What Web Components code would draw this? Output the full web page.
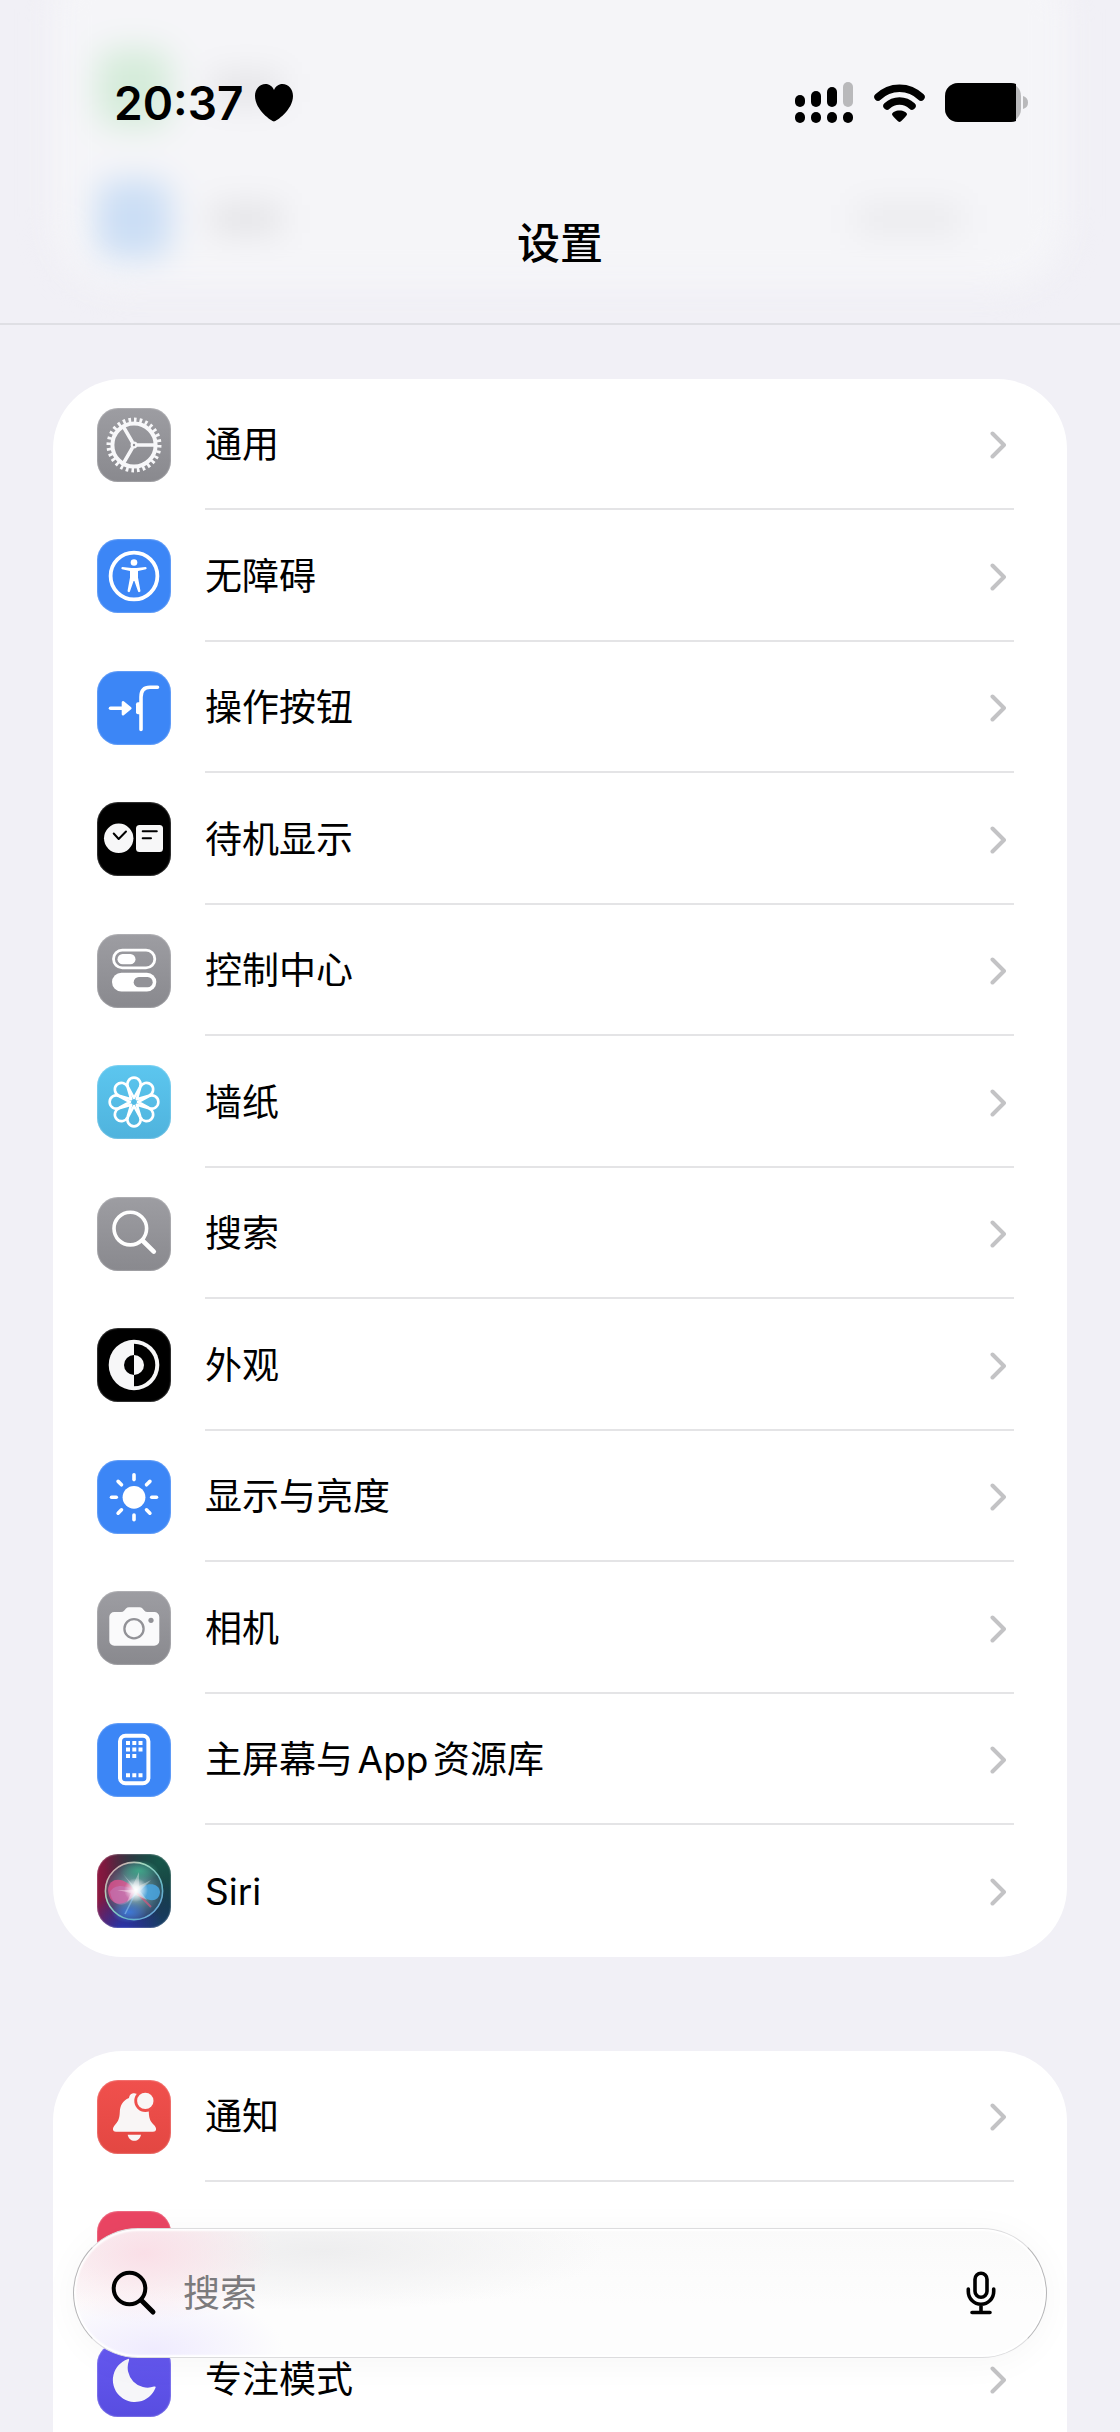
<!DOCTYPE html>
<html lang="zh-CN">
<head>
<meta charset="utf-8">
<meta name="viewport" content="width=device-width, initial-scale=1">
<title>设置</title>
<style>
    html, body {
        height: 100%;
        margin: 0;
    }

    body {
        background: #f1f0f6;
        color: #000;
        font: 400 37px/52px Inter, "Noto Sans CJK SC", sans-serif;
    }
</style>
</head>
<body>
<settings-app>
    <settings-header slot="header">设置</settings-header>

    <settings-group>
        <settings-row icon="gear">通用</settings-row>
        <settings-row icon="accessibility">无障碍</settings-row>
        <settings-row icon="action">操作按钮</settings-row>
        <settings-row icon="standby">待机显示</settings-row>
        <settings-row icon="control">控制中心</settings-row>
        <settings-row icon="wallpaper">墙纸</settings-row>
        <settings-row icon="search">搜索</settings-row>
        <settings-row icon="appearance">外观</settings-row>
        <settings-row icon="display">显示与亮度</settings-row>
        <settings-row icon="camera">相机</settings-row>
        <settings-row icon="home">主屏幕与App资源库</settings-row>
        <settings-row icon="siri">Siri</settings-row>
    </settings-group>

    <settings-group continued>
        <settings-row icon="bell">通知</settings-row>
        <settings-row icon="sound"></settings-row>
        <settings-row icon="moon">专注模式</settings-row>
    </settings-group>

    <settings-search slot="search" placeholder="搜索"></settings-search>
</settings-app>

<script>
const PETAL = 'M37 33 L31 22 A6.6 6.6 0 1 1 43 22 Z';

// every icon is drawn on a 74 x 74 tile
const ICONS = {
    gear: {
        bg: 'linear-gradient(#9d9da2, #89898e)',
        svg: `
            <g fill="none" stroke="#f7f7f9">
                <circle cx="37" cy="37" r="25" stroke-width="5" pathLength="84" stroke-dasharray="1.4 1.6"/>
                <circle cx="37" cy="37" r="21.6" stroke-width="4"/>
                <path d="M40 37H58M35.500 34.400L26.500 18.800M35.500 39.600L26.500 55.200" stroke-width="3.6"/>
                <circle cx="37" cy="37" r="2.300" stroke-width="2.200"/>
            </g>`
    },
    accessibility: {
        bg: '#3c86f6',
        svg: `
            <circle cx="37" cy="37" r="23.4" fill="none" stroke="#fff" stroke-width="3.8"/>
            <circle cx="37" cy="23.500" r="3.300" fill="#fff"/>
            <path fill="#fff" d="M25.500 27.900L34.500 28.900H39.500L48.500 27.900A1.300 1.300 0 0 1 49 30.300L41 31.900V38.500L43.400 51.500A1.200 1.200 0 0 1 41 52.200L37.400 42H36.600L33 52.200A1.200 1.200 0 0 1 30.600 51.500L33 38.500V31.900L25 30.300A1.300 1.300 0 0 1 25.500 27.900Z"/>`
    },
    action: {
        bg: '#3c86f6',
        svg: `
            <g fill="none" stroke="#fff" stroke-width="3.6" stroke-linecap="round" stroke-linejoin="round">
                <path d="M13.500 37.300H26"/>
                <path d="M44 58.500V26Q44 16.300 53 16.300H60.500"/>
            </g>
            <path d="M26 31.300V43.300L33.300 37.300Z" fill="#fff" stroke="#fff" stroke-width="2.600" stroke-linejoin="round"/>
            <rect x="39" y="31.300" width="6" height="12" rx="2" fill="#fff"/>`
    },
    standby: {
        bg: '#000',
        svg: `
            <circle cx="21.700" cy="36.300" r="14.700" fill="#f7f7f8"/>
            <rect x="39" y="23" width="27" height="27" rx="3.500" fill="#f7f7f8"/>
            <path d="M16.700 31.500L21.700 37L29 29.500M45.700 29.300H59.800M45.700 36.300H54" fill="none" stroke="#000" stroke-width="2" stroke-linecap="round" stroke-linejoin="round"/>`
    },
    control: {
        bg: 'linear-gradient(#9d9da2, #89898e)',
        svg: `
            <rect x="16.500" y="16.200" width="41.300" height="17.600" rx="8.800" fill="none" stroke="#fff" stroke-width="2.800"/>
            <rect x="20.500" y="20" width="18" height="10.300" rx="5.150" fill="#fff"/>
            <rect x="15" y="38.700" width="44.300" height="18.800" rx="9.400" fill="#fff"/>
            <rect x="36.700" y="43" width="19" height="10.300" rx="5.150" fill="#929297"/>`
    },
    wallpaper: {
        bg: 'linear-gradient(#5cc6ef, #4fb3dd)',
        svg: `
            <g fill="none" stroke="#fff" stroke-width="2.600" stroke-linejoin="round">
                ${[0, 45, 90, 135, 180, 225, 270, 315].map(a => `<path d="${PETAL}" transform="rotate(${a} 37 37)"/>`).join('')}
            </g>
            <circle cx="37" cy="37" r="2.300" fill="#55bce6"/>`
    },
    search: {
        bg: 'linear-gradient(#9d9da2, #89898e)',
        svg: `
            <g fill="none" stroke="#fff" stroke-linecap="round">
                <circle cx="33.300" cy="31.600" r="16.300" stroke-width="3.600"/>
                <path d="M45.500 43.500L56.800 54.600" stroke-width="4.600"/>
            </g>`
    },
    appearance: {
        bg: '#000',
        svg: `
            <circle cx="37" cy="37" r="25.300" fill="#f7f7f8"/>
            <path d="M37 15.700A21.300 21.300 0 0 1 37 58.300Z"/>
            <path d="M37 27A10 10 0 0 0 37 47Z"/>
            <path d="M37 27A10 10 0 0 1 37 47Z" fill="#f7f7f8"/>`
    },
    display: {
        bg: '#3c86f6',
        svg: `
            <circle cx="37" cy="37.300" r="11.400" fill="#fff"/>
            <g stroke="#fff" stroke-width="3.600" stroke-linecap="round">
                ${[0, 45, 90, 135, 180, 225, 270, 315].map(a => `<path d="M37 14.800V19.600" transform="rotate(${a} 37 37.300)"/>`).join('')}
            </g>`
    },
    camera: {
        bg: 'linear-gradient(#9d9da2, #89898e)',
        svg: `
            <path fill="#fafafb" d="M17.300 21H24Q26 21 27.300 19.500L29 17.600Q30.200 16.300 32 16.300H42.500Q44.300 16.300 45.500 17.600L47.200 19.500Q48.500 21 50.500 21H57.300A5 5 0 0 1 62.300 26V49.700A5 5 0 0 1 57.300 54.700H17.300A5 5 0 0 1 12.300 49.700V26A5 5 0 0 1 17.300 21Z"/>
            <circle cx="37" cy="37.700" r="9.600" fill="none" stroke="#929297" stroke-width="2.300"/>
            <circle cx="54" cy="29.300" r="2.600" fill="#929297"/>`
    },
    home: {
        bg: '#3c86f6',
        svg: `
            <rect x="23" y="12.700" width="28.400" height="47.600" rx="5.500" fill="none" stroke="#fff" stroke-width="4"/>
            <path fill="#fff" d="M29 18h4v4h-4zM35.300 18h4v4h-4zM41.500 18h4v4h-4zM29 24.500h4v4h-4zM35.300 24.500h4v4h-4zM41.500 24.500h4v4h-4zM29 31h4v4h-4zM35.300 31h4v4h-4zM29 50.300h4v4h-4zM35.300 50.300h4v4h-4zM41.500 50.300h4v4h-4z"/>`
    },
    siri: {
        bg: 'radial-gradient(circle at 35% 105%, #2436b4, transparent 45%), radial-gradient(circle at 90% 100%, #173f66, transparent 50%), radial-gradient(circle at 85% 10%, #17564a, transparent 60%), linear-gradient(90deg, #8d1740, #3d1f3a 50%, #12343c)',
        svg: `
            <defs>
                <radialGradient id="orb" cx=".5" cy=".5" r=".5">
                    <stop offset="0" stop-color="#b9d6dd"/>
                    <stop offset=".5" stop-color="#6f9fa8" stop-opacity=".75"/>
                    <stop offset="1" stop-color="#4a6d86" stop-opacity=".35"/>
                </radialGradient>
                <radialGradient id="glow" cx=".5" cy=".5" r=".5">
                    <stop offset="0" stop-color="#fff"/>
                    <stop offset=".3" stop-color="#fff" stop-opacity=".8"/>
                    <stop offset="1" stop-color="#fff" stop-opacity="0"/>
                </radialGradient>
                <linearGradient id="rim" x1="0" y1="0" x2="1" y2="1">
                    <stop offset="0" stop-color="#e88fa5"/>
                    <stop offset=".35" stop-color="#9fd9bd"/>
                    <stop offset=".7" stop-color="#64b5c8"/>
                    <stop offset="1" stop-color="#6fa0e8"/>
                </linearGradient>
                <radialGradient id="top" cx=".5" cy=".5" r=".5">
                    <stop offset="0" stop-color="#3fa588"/>
                    <stop offset="1" stop-color="#3fa588" stop-opacity="0"/>
                </radialGradient>
                <radialGradient id="bottom" cx=".5" cy=".5" r=".5">
                    <stop offset="0" stop-color="#3d77d6"/>
                    <stop offset="1" stop-color="#3d77d6" stop-opacity="0"/>
                </radialGradient>
            </defs>
            <circle cx="37" cy="37" r="29" fill="url(#orb)"/>
            <ellipse cx="42" cy="17" rx="20" ry="11" fill="url(#top)"/>
            <ellipse cx="32" cy="58" rx="18" ry="11" fill="url(#bottom)"/>
            <path d="M38 38C32 24 12 20 11 36C12 54 30 54 38 38Z" fill="#e0518e" fill-opacity=".8"/>
            <path d="M38 38C30 30 17 30 13 38C16 56 32 54 38 38Z" fill="#c08ccf" fill-opacity=".4"/>
            <path d="M40 37C48 28 62 28 63 38C62 50 48 48 40 37Z" fill="#4aa6e2" fill-opacity=".85"/>
            <path d="M40 39L54 53" stroke="#d5567e" stroke-width="2" stroke-opacity=".7"/>
            <path d="M38 40L28 60" stroke="#8cc3f2" stroke-width="1.500" stroke-opacity=".6"/>
            <path d="M38 36L26 20L36 31L42 18L42 32L54 26L43 37L50 46L39 41L30 48L34 39L20 36Z" fill="#fff" fill-opacity=".35"/>
            <circle cx="39" cy="36" r="12" fill="url(#glow)"/>
            <circle cx="37" cy="37" r="28.600" fill="none" stroke="url(#rim)" stroke-width="1.600"/>`
    },
    bell: {
        bg: 'linear-gradient(#f0504d, #e34742)',
        svg: `
            <path fill="#f9f6f6" d="M37.300 13.300C33.500 13.300 32.500 15.500 32 18C25.500 20.500 23 26 22.800 32C22.500 40 20.500 42 17.500 45.500C15 48.500 15.500 51.700 19 51.700H56C59.500 51.700 60 48.500 57.500 45.500C54 42 52 40 51.800 32C51.800 24 45 14 37.300 13.300Z"/>
            <path fill="#f9f6f6" d="M30.700 54.800H44C43 59 40.500 60.800 37.300 60.800S31.700 59 30.700 54.800Z"/>
            <circle cx="48.300" cy="20.900" r="11" fill="#ee4f4b"/>
            <circle cx="48.300" cy="20.900" r="8.200" fill="#f9f6f6"/>`
    },
    sound: {
        bg: '#ea4563',
        svg: ''
    },
    moon: {
        bg: 'linear-gradient(#6659f2, #584de0)',
        svg: `<path fill="#f6f6f9" d="M30.500 16.300Q32.500 15 32 17.500A20 20 0 0 0 57 43.600Q59.500 43 58.300 45.200A22 22 0 1 1 30.500 16.300Z"/>`
    }
};

class AppIcon extends HTMLElement {
    connectedCallback() {
        const icon = ICONS[this.getAttribute('name')];
        this.attachShadow({mode: 'open'}).innerHTML = `
            <style>
                :host {
                    display: block;
                    flex: none;
                    width: 74px;
                    height: 74px;
                    border-radius: 21px;
                    overflow: hidden;
                    background: ${icon.bg};
                    box-shadow: inset 0 0 1px 1px rgba(255, 255, 255, .2);
                }

                svg {
                    display: block;
                }
            </style>
            <svg width="74" height="74" viewBox="0 0 74 74" aria-hidden="true">${icon.svg}</svg>`;
    }
}
customElements.define('app-icon', AppIcon);


class SettingsRow extends HTMLElement {
    connectedCallback() {
        this.attachShadow({mode: 'open'}).innerHTML = `
            <style>
                :host {
                    display: block;
                    height: 131px;
                }

                :host(:nth-child(even)) {
                    height: 132px;
                }

                a {
                    display: flex;
                    align-items: center;
                    gap: 34px;
                    height: 100%;
                    padding: 0 53px 0 44px;
                    color: inherit;
                    text-decoration: none;
                }

                .content {
                    display: flex;
                    flex: 1;
                    align-items: center;
                    justify-content: space-between;
                    box-sizing: border-box;
                    height: 100%;
                    padding: 3px 8px 0 0;
                    border-bottom: 2px solid #e4e4e6;
                }

                :host(:last-child) .content {
                    border-color: transparent;
                }

                .label {
                    text-autospace: normal;
                }
            </style>
            <a href="#${this.getAttribute('icon')}">
                <app-icon name="${this.getAttribute('icon')}"></app-icon>
                <span class="content">
                    <span class="label"><slot></slot></span>
                    <svg width="16" height="28" viewBox="0 0 16 28" fill="none" stroke="#c3c3c5" stroke-width="4" stroke-linecap="round" stroke-linejoin="round" aria-hidden="true">
                        <path d="M2.500 2.500L14 14L2.500 25.500"/>
                    </svg>
                </span>
            </a>`;
    }
}
customElements.define('settings-row', SettingsRow);


class SettingsGroup extends HTMLElement {
    connectedCallback() {
        this.attachShadow({mode: 'open'}).innerHTML = `
            <style>
                :host {
                    display: block;
                    border-radius: 70px;
                    background: #fff;
                }

                :host([continued]) {
                    border-radius: 70px 70px 0 0;
                }
            </style>
            <slot></slot>`;
    }
}
customElements.define('settings-group', SettingsGroup);


class StatusBar extends HTMLElement {
    connectedCallback() {
        this.attachShadow({mode: 'open'}).innerHTML = `
            <style>
                :host {
                    display: flex;
                    align-items: center;
                    justify-content: space-between;
                    padding: 0 91px 0 114px;
                    font-size: 46px;
                    font-weight: 600;
                    line-height: 62px;
                }

                div {
                    display: flex;
                    align-items: center;
                }

                .time {
                    gap: 12px;
                }

                .signals {
                    gap: 20px;
                }

                svg {
                    display: block;
                }
            </style>
            <div class="time">
                <time>20:37</time>
                <svg width="38" height="38" viewBox="0 0 38 38" aria-hidden="true">
                    <path d="M19 37.500C17 37.500 0 26 0 12C0 5 4.500 0 10.500 0C14.500 0 17.500 2.500 19 6C20.500 2.500 23.500 0 27.500 0C33.500 0 38 5 38 12C38 26 21 37.500 19 37.500Z"/>
                </svg>
            </div>
            <div class="signals">
                <svg width="59" height="42" viewBox="0 0 59 42" role="img" aria-label="信号">
                    <rect x="0" y="13" width="10" height="12" rx="5"/>
                    <rect x="16" y="9" width="10" height="16" rx="5"/>
                    <rect x="32" y="5" width="10" height="20" rx="5"/>
                    <rect x="48" y="0" width="10" height="25" rx="5" fill="#b9b9bb"/>
                    <rect x="0" y="30" width="10" height="11" rx="5"/>
                    <rect x="16" y="30" width="10" height="11" rx="5"/>
                    <rect x="32" y="30" width="10" height="11" rx="5"/>
                    <rect x="48" y="30" width="10" height="11" rx="5"/>
                </svg>
                <svg width="51" height="38" viewBox="0 0 51 38" role="img" aria-label="无线局域网">
                    <path d="M4 13A30.500 30.500 0 0 1 47 13M13 22A18 18 0 0 1 38 22" fill="none" stroke="#000" stroke-width="7.500" stroke-linecap="round"/>
                    <path d="M25.500 26.500C29.500 26.500 33 28.500 33 30.300C33 31.500 27 38 25.500 38S18 31.500 18 30.300C18 28.500 21.500 26.500 25.500 26.500Z"/>
                </svg>
                <svg width="84" height="40" viewBox="0 0 84 40" role="img" aria-label="电池">
                    <rect width="76" height="39" rx="13" fill="#b9b9bb"/>
                    <path d="M13 0H66Q69 0 71 1V38Q69 39 66 39H13A13 13 0 0 1 0 26V13A13 13 0 0 1 13 0Z"/>
                    <path d="M78 13Q83 14.500 83 19.500T78 26Z" fill="#b9b9bb"/>
                </svg>
            </div>`;
    }
}
customElements.define('status-bar', StatusBar);


class SettingsHeader extends HTMLElement {
    connectedCallback() {
        this.attachShadow({mode: 'open'}).innerHTML = `
            <style>
                :host {
                    display: block;
                    position: relative;
                    overflow: hidden;
                    padding: 72px 0 52px;
                    border-bottom: 2px solid #dfdfe4;
                }

                h1 {
                    margin: 81px 0 0;
                    font-size: 43px;
                    font-weight: 500;
                    line-height: 56px;
                    text-align: center;
                }

                status-bar, h1 {
                    position: relative;
                }

                /* rows that have scrolled behind the bar */
                .behind {
                    position: absolute;
                    inset: -60px 53px 34px;
                    box-sizing: border-box;
                    border-radius: 70px;
                    background: #f5f5f8;
                    filter: blur(16px);
                    padding: 111px 60px 0 44px;
                }

                .behind p {
                    display: flex;
                    align-items: center;
                    gap: 40px;
                    height: 74px;
                    margin: 0 0 57px;
                }

                .tile {
                    width: 74px;
                    height: 78px;
                    border-radius: 18px;
                    background: #cbdef5;
                }

                .green {
                    background: #d5ecda;
                }

                .text {
                    width: 70px;
                    height: 30px;
                    background: #e3e3e6;
                }

                .value {
                    width: 104px;
                    height: 30px;
                    margin: 0 46px 0 auto;
                    background: #eaeaed;
                }
            </style>
            <div class="behind" aria-hidden="true">
                <p><span class="tile green"></span><span class="text"></span></p>
                <p><span class="tile"></span><span class="text"></span><span class="value"></span></p>
            </div>
            <status-bar></status-bar>
            <h1><slot></slot></h1>`;
    }
}
customElements.define('settings-header', SettingsHeader);


class SettingsSearch extends HTMLElement {
    connectedCallback() {
        const placeholder = this.getAttribute('placeholder');
        this.attachShadow({mode: 'open'}).innerHTML = `
            <style>
                :host {
                    display: block;
                }

                label {
                    display: flex;
                    align-items: center;
                    box-sizing: border-box;
                    height: 130px;
                    padding: 0 50px 0 37px;
                    border: 1px solid #dcdcde;
                    border-left-color: #b4b4b6;
                    border-right-color: #b4b4b6;
                    border-radius: 65px;
                    background:
                        radial-gradient(ellipse 130px 70px at 70px 24px, #fadfe7, transparent),
                        radial-gradient(ellipse 130px 60px at 80px 122px, #efebfe, transparent),
                        radial-gradient(ellipse 280px 60px at 250px 22px, #eeeeef, transparent),
                        linear-gradient(#fafafa, #fdfdfd 60%);
                    box-shadow: inset 0 0 2px 2px #fff, 0 4px 36px rgba(0, 0, 0, .04);
                }

                input {
                    flex: 1;
                    min-width: 0;
                    margin: 0 26px;
                    padding: 2px 0 0;
                    border: 0;
                    outline: 0;
                    background: none;
                    color: inherit;
                    font: inherit;
                }

                input::placeholder {
                    color: #7b7a7c;
                    opacity: 1;
                }

                button {
                    padding: 0;
                    border: 0;
                    background: none;
                }

                svg {
                    display: block;
                }
            </style>
            <label>
                <svg width="46" height="46" viewBox="0 0 46 46" fill="none" stroke="#000" stroke-linecap="round" aria-hidden="true">
                    <circle cx="18.500" cy="18.500" r="15.800" stroke-width="4"/>
                    <path d="M30.500 30.500L42 42" stroke-width="5"/>
                </svg>
                <input type="text" placeholder="${placeholder}" aria-label="${placeholder}">
                <button type="button" aria-label="听写">
                    <svg width="30" height="44" viewBox="0 0 30 44" fill="none" stroke="#000" stroke-width="3.600" stroke-linecap="round" aria-hidden="true">
                        <rect x="9" y="2.300" width="12" height="24" rx="6"/>
                        <path d="M2.300 18V20.500A12.700 12.700 0 0 0 27.700 20.500V18M15 34V41M6 41.500H24"/>
                    </svg>
                </button>
            </label>`;
    }
}
customElements.define('settings-search', SettingsSearch);


class SettingsApp extends HTMLElement {
    connectedCallback() {
        this.attachShadow({mode: 'open'}).innerHTML = `
            <style>
                :host {
                    display: flex;
                    flex-direction: column;
                    position: relative;
                    height: 100vh;
                    overflow: hidden;
                }

                main {
                    display: flex;
                    flex: 1;
                    flex-direction: column;
                    gap: 94px;
                    min-height: 0;
                    padding: 54px 53px 0;
                    overflow-y: auto;
                    scrollbar-width: none;
                }

                ::slotted(settings-group) {
                    flex: none;
                }

                /* the search field floats over the list */
                .floating {
                    position: absolute;
                    right: 73px;
                    bottom: 74px;
                    left: 73px;
                }
            </style>
            <slot name="header"></slot>
            <main><slot></slot></main>
            <div class="floating"><slot name="search"></slot></div>`;
    }
}
customElements.define('settings-app', SettingsApp);
</script>
</body>
</html>
